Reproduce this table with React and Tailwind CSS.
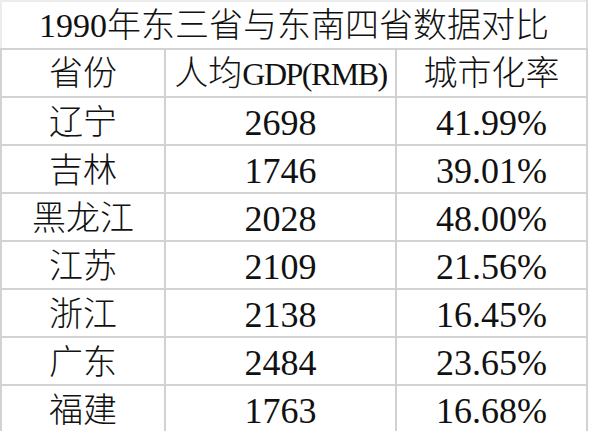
import React from "react";

const rows = [
  ["辽宁", "2698", "41.99%"],
  ["吉林", "1746", "39.01%"],
  ["黑龙江", "2028", "48.00%"],
  ["江苏", "2109", "21.56%"],
  ["浙江", "2138", "16.45%"],
  ["广东", "2484", "23.65%"],
  ["福建", "1763", "16.68%"],
];

const cell =
  "h-[48px] whitespace-nowrap border-2 border-[#d2d2d2] p-0 text-center leading-none";

const App = () => {
  return (
    <div className="h-[431px] w-[590px] overflow-hidden bg-white font-['Liberation_Serif','Times_New_Roman','DejaVu_Serif','Noto_Sans_CJK_SC',serif] text-[#111]">
      <table className="w-[586px] table-fixed border-collapse">
        <colgroup>
          <col className="w-[164px]" />
          <col className="w-[231px]" />
          <col className="w-[191px]" />
        </colgroup>
        <tbody>
          <tr>
            <td
              colSpan={3}
              className="h-[48px] whitespace-nowrap border-2 border-[#ececec] border-r-[#dcdcdc] border-b-[#d2d2d2] p-0 pt-[2px] text-center text-[34px] leading-none font-light"
            >
              1990年东三省与东南四省数据对比
            </td>
          </tr>
          <tr>
            <td className={`${cell} pt-[2px] text-[34px] font-light`}>省份</td>
            <td className={`${cell} pt-[2px] text-[34px] font-light`}>
              人均<span className="text-[32px] tracking-[-1.5px]">GDP(RMB)</span>
            </td>
            <td className={`${cell} pt-[2px] text-[34px] font-light`}>城市化率</td>
          </tr>
          {rows.map((item, index) => (
            <tr key={index}>
              <td className={`${cell} pt-[3px] text-[34px] font-light`}>{item[0]}</td>
              <td className={`${cell} pt-[3px] text-[36px]`}>{item[1]}</td>
              <td className={`${cell} pt-[3px] text-[36px]`}>{item[2]}</td>
            </tr>
          ))}
        </tbody>
      </table>
    </div>
  );
};

export default App;
